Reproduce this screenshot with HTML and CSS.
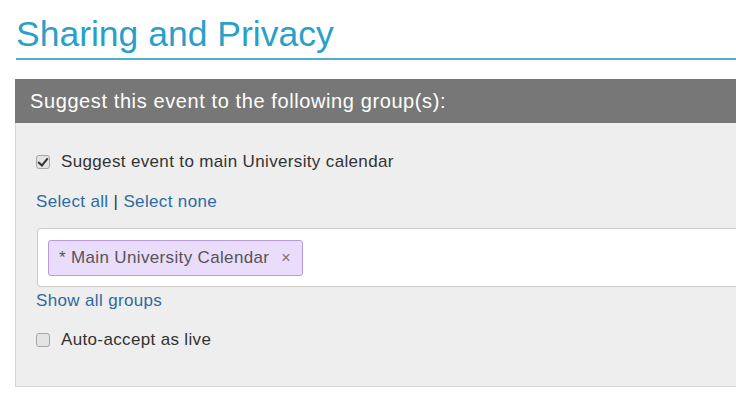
FILE: index.html
```html
<!DOCTYPE html>
<html>
<head>
<meta charset="utf-8">
<link rel="stylesheet" href="styles.css">
</head>
<body>
<div class="page">
  <h2 class="title">Sharing and Privacy</h2>
  <div class="panel">
    <div class="panel-head">Suggest this event to the following group(s):</div>
    <div class="panel-body">
      <label class="check-row first"><input type="checkbox" checked><span>Suggest event to main University calendar</span></label>
      <div class="links select"><a href="#">Select all</a> | <a href="#">Select none</a></div>
      <div class="tag-box">
        <span class="tag">* Main University Calendar<span class="tag-x">×</span></span>
      </div>
      <div class="links show"><a href="#">Show all groups</a></div>
      <label class="check-row auto"><input type="checkbox"><span>Auto-accept as live</span></label>
    </div>
  </div>
</div>
</body>
</html>
```
FILE: styles.css
```css
html, body {
  margin: 0;
  padding: 0;
  background: #fff;
  font-family: "Liberation Sans", Arial, sans-serif;
  color: #333;
  overflow: hidden;
}
.page {
  padding: 0 0 0 16px;
}
.title {
  margin: 0;
  padding-top: 12px;
  font-size: 35.5px;
  font-weight: normal;
  line-height: 44px;
  color: #2a9fc8;
  border-bottom: 2px solid #4fb0d0;
  height: 46px;
}
.panel {
  margin-top: 19px;
  margin-left: -1px;
  border: 1px solid #d4d4d4;
  border-right: none;
  border-top: none;
  background: #eeeeee;
}
.panel-head {
  background: #777777;
  color: #fff;
  font-size: 20px;
  letter-spacing: 0.6px;
  height: 44px;
  line-height: 44px;
  padding-left: 15px;
  margin-left: -1px;
}
.panel-body {
  padding: 29px 0 36px 20px;
  font-size: 17px;
  letter-spacing: 0.35px;
}
.check-row {
  display: flex;
  align-items: center;
  height: 20px;
}
.check-row input {
  appearance: none;
  -webkit-appearance: none;
  margin: 0 11px 0 0;
  width: 14px;
  height: 14px;
  box-sizing: border-box;
  border: 1px solid #a6a6a6;
  border-radius: 3px;
  background: #e4e4e4;
  position: relative;
  flex: none;
}
.check-row input:checked::after {
  content: "";
  position: absolute;
  left: 3px;
  top: 0px;
  width: 4px;
  height: 8px;
  border: solid #333;
  border-width: 0 2px 2px 0;
  transform: rotate(40deg);
}
.check-row span {
  color: #333;
}
.links {
  line-height: 20px;
  color: #333;
}
.links a {
  color: #2e6a9e;
  text-decoration: none;
}
.select {
  margin-top: 20px;
}
.tag-box {
  margin-top: 16px;
  margin-left: 1px;
  background: #fff;
  border: 1px solid #cccccc;
  border-right: none;
  border-radius: 4px 0 0 4px;
  height: 59px;
  padding: 11px 0 0 10px;
  box-sizing: border-box;
}
.tag {
  display: inline-block;
  background: #eadcfb;
  border: 1px solid #b79ae0;
  border-radius: 3px;
  height: 36px;
  line-height: 34px;
  box-sizing: border-box;
  padding: 0 11px 0 10px;
  color: #555;
  font-size: 17px;
  letter-spacing: 0.35px;
}
.tag-x {
  margin-left: 12px;
  color: #777;
  font-size: 16px;
}
.show {
  margin-top: 4px;
}
.auto {
  margin-top: 19px;
}
```
